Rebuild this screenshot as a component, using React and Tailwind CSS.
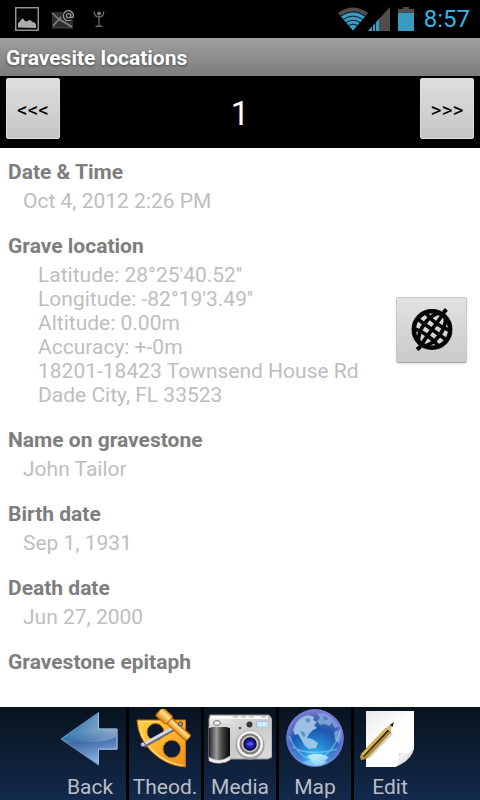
import React from "react";

function PictureIcon() {
  return (
    <svg width="24" height="24" viewBox="0 0 24 24" aria-hidden="true">
      <rect x="0.75" y="0.75" width="22.5" height="22.5" fill="#050505" stroke="#a5a5a5" strokeWidth="1.3" />
      <path d="M3 20.5V16l2-1.5 1-2 2-1 2 2.5 2 .5 2-1.500 2 .5 1.500 1.500 2 .5 1.500 2v3.500z" fill="#ababab" />
    </svg>
  );
}

function MailIcon() {
  return (
    <svg width="24" height="20" viewBox="0 0 24 20" aria-hidden="true">
      <rect x="1" y="3" width="21" height="16" fill="#303030" />
      <path d="M1 4l8 7 4 2 8 5M2 17l8-9" fill="none" stroke="#858585" strokeWidth="1.500" />
      <path d="M1 19h21" stroke="#444" />
      <circle cx="17.500" cy="6.500" r="6.200" fill="#0b0b0b" />
      <circle cx="17.500" cy="6.700" r="2.100" fill="none" stroke="#999" strokeWidth="1.300" />
      <path d="M19.700 4.500v3.300c0 1.400 2.700 1.300 2.700-1.400a5 5 0 1 0-2 4.300" fill="none" stroke="#999" strokeWidth="1.300" />
    </svg>
  );
}

function BeaconIcon() {
  return (
    <svg width="12" height="18" viewBox="0 0 12 18" aria-hidden="true">
      <circle cx="6" cy="3.500" r="2" fill="#777" />
      <path d="M1.300 1.500Q1.300 7 6 7t4.700-5.500M6 6v10M2.500 16.200h7" fill="none" stroke="#666" strokeWidth="1.400" />
    </svg>
  );
}

function WifiIcon() {
  return (
    <svg width="30" height="24" viewBox="0 0 30 24" aria-hidden="true">
      <path d="M15 23.500L0 6Q15-5 30 6z" fill="#504c4b" />
      <path d="M15 23.500L3 9.500Q15 1 27 9.500z" fill="#379bc2" />
      <path d="M5.500 12.300Q15 6 24.500 12.300M8 15.500Q15 11 22 15.500M10.500 18.500Q15 15.700 19.500 18.500M2.800 9Q15 .5 27.200 9" fill="none" stroke="#031820" strokeWidth="1" />
    </svg>
  );
}

function SignalIcon() {
  return (
    <svg width="22" height="24" viewBox="0 0 22 24" aria-hidden="true">
      <path d="M0 24L22 0v24z" fill="#504c4b" />
      <path d="M0 24L11 12v12z" fill="#379bc2" />
      <path d="M4.500 18v6M7.500 15v9" stroke="#06202a" strokeWidth="1" />
    </svg>
  );
}

function BatteryIcon() {
  return (
    <svg width="16" height="24" viewBox="0 0 16 24" aria-hidden="true">
      <path d="M5 0h6v2h5v22H0V2h5z" fill="#504c4b" />
      <path d="M0 6h16v18H0z" fill="#379bc2" />
    </svg>
  );
}

function WireGlobeIcon() {
  return (
    <svg width="44" height="44" viewBox="0 0 44 44" fill="none" stroke="#050505" aria-hidden="true">
      <path d="M8.500 41.500L36 1.500" strokeWidth="2.500" />
      <path d="M7 41.500l3.500-3M33.500 4.500l3-3" strokeWidth="4" />
      <circle cx="22" cy="21.500" r="18.200" strokeWidth="4.500" />
      <g transform="rotate(36 22 21.500)" strokeWidth="3.600">
        <ellipse cx="22" cy="21.500" rx="9.500" ry="18.500" />
        <path d="M22 3v37M4.500 21.500h35M8 12Q22 16 36 12M8 31Q22 27 36 31" />
      </g>
    </svg>
  );
}

function BackIcon() {
  return (
    <svg width="60" height="60" viewBox="0 0 60 60" aria-hidden="true">
      <defs>
        <linearGradient id="arrowFill" x1="0" y1="0" x2="0.2" y2="1">
          <stop offset="0" stopColor="#3f7eb4" />
          <stop offset="0.450" stopColor="#769fc9" />
          <stop offset="0.600" stopColor="#3d68a4" />
          <stop offset="1" stopColor="#88aedf" />
        </linearGradient>
        <linearGradient id="arrowShine" x1="0" y1="0" x2="1" y2="0">
          <stop offset="0" stopColor="#1563a4" stopOpacity="0.700" />
          <stop offset="1" stopColor="#a9c0da" stopOpacity="0.600" />
        </linearGradient>
      </defs>
      <path d="M1 30L38.500 3.500V20h18.500v20.500H38.500V56z" fill="url(#arrowFill)" stroke="#7ca4cc" strokeWidth="0.800" />
      <path d="M2 30L38 5v16h18v7q-9 5-27 5T2 30z" fill="url(#arrowShine)" />
      <path d="M38.500 4v16H57v20H38.500v15" fill="none" stroke="#9dbbdb" />
      <path d="M2 30.500l36-26" stroke="#3f8bc7" />
    </svg>
  );
}

function TheodoliteIcon() {
  return (
    <svg width="60" height="60" viewBox="0 0 60 60" aria-hidden="true">
      <defs>
        <linearGradient id="plateFill" x1="0" y1="0" x2="0.700" y2="1">
          <stop offset="0" stopColor="#ffd04d" />
          <stop offset="0.500" stopColor="#ffb62d" />
          <stop offset="1" stopColor="#f0961f" />
        </linearGradient>
        <linearGradient id="rodFill" x1="0" y1="0" x2="0" y2="1">
          <stop offset="0" stopColor="#e79222" />
          <stop offset="0.350" stopColor="#ffe38a" />
          <stop offset="1" stopColor="#de7f10" />
        </linearGradient>
      </defs>
      <path
        fillRule="evenodd"
        d="M2 11h48.500v47Q31 57 16 42 3 29 2 11zM12 23a8.500 8.500 0 1 0 17 0 8.500 8.500 0 1 0-17 0zM28 40a8.800 8.800 0 1 0 17.600 0 8.800 8.800 0 1 0-17.600 0z"
        fill="url(#plateFill)"
        stroke="#c06c10"
      />
      <path d="M3.500 12.500H24M5 20q3 12 13 22 12 12 30 14.500" fill="none" stroke="#ffe28c" strokeWidth="1.200" />
      <path d="M10 36L45 16" stroke="#716c72" strokeWidth="4.500" strokeLinecap="round" />
      <path d="M9 35L44 15.500" stroke="#d8d9df" strokeWidth="3" strokeLinecap="round" />
      <circle cx="8" cy="35.500" r="2.200" fill="#d5d2ef" stroke="#58526c" />
      <g transform="translate(27 5) rotate(42)">
        <rect x="2" y="-3.500" width="34" height="7.500" rx="1.500" fill="url(#rodFill)" stroke="#b9660c" />
        <rect x="-4" y="-5.500" width="14" height="11" rx="2" fill="url(#rodFill)" stroke="#b9660c" />
      </g>
      <circle cx="45.500" cy="15" r="2.300" fill="#949291" stroke="#65513f" />
    </svg>
  );
}

function CameraIcon() {
  return (
    <svg width="64" height="60" viewBox="0 0 64 60" aria-hidden="true">
      <defs>
        <linearGradient id="bodyFill" x1="0" y1="0" x2="1" y2="1">
          <stop offset="0" stopColor="#f0f0f0" />
          <stop offset="0.500" stopColor="#c9c9c9" />
          <stop offset="1" stopColor="#dedede" />
        </linearGradient>
        <linearGradient id="gripFill">
          <stop offset="0" stopColor="#252525" />
          <stop offset="0.350" stopColor="#9b9b9b" />
          <stop offset="0.600" stopColor="#4a4a4a" />
          <stop offset="1" stopColor="#050505" />
        </linearGradient>
        <radialGradient id="lensFill">
          <stop offset="0" stopColor="#5b5af0" />
          <stop offset="0.450" stopColor="#211ec4" />
          <stop offset="1" stopColor="#080714" />
        </radialGradient>
      </defs>
      <path d="M2 6h59l3 4v38l-4 2H23l-5 3H5l-4-3V10z" fill="url(#bodyFill)" stroke="#929292" />
      <path d="M3 7h57v3H3z" fill="#fafafa" />
      <path d="M25 8h24M53 8h6" stroke="#aaa" strokeDasharray="5 3" />
      <path d="M1 18h21v33q-10 5-21 0z" fill="url(#gripFill)" />
      <path d="M1 17q9-5 21 0v2q-11-5-21 0zM1 48q10 7 21-1v4q-10 6-21 1z" fill="#ededed" stroke="#b3b3b3" strokeWidth="0.500" />
      <ellipse cx="9" cy="14" rx="3.500" ry="2.300" fill="#fff" stroke="#666" />
      <circle cx="41.500" cy="15.500" r="3" fill="#353535" />
      <circle cx="32" cy="19" r="1.300" fill="#6d4646" />
      <rect x="48.500" y="12.500" width="12" height="5.500" fill="#c3e7f8" stroke="#a2c4d4" />
      <path d="M52 13v5M56 13v5" stroke="#eefbff" />
      <circle cx="42" cy="36" r="14.500" fill="#a1a1a1" />
      <circle cx="42" cy="35" r="13" fill="#f0f0f0" />
      <circle cx="42" cy="35" r="10.500" fill="#7a7a7a" />
      <circle cx="42" cy="35" r="8.500" fill="#c5c5bd" />
      <circle cx="42" cy="35" r="6.700" fill="url(#lensFill)" />
      <path d="M38.500 35h3M43 33l2 3" stroke="#716ef5" />
    </svg>
  );
}

function EarthIcon() {
  return (
    <svg width="60" height="60" viewBox="0 0 60 60" aria-hidden="true">
      <defs>
        <radialGradient id="oceanFill" cx="0.500" cy="0.850" r="0.850">
          <stop offset="0" stopColor="#4ad6fb" />
          <stop offset="0.250" stopColor="#2590da" />
          <stop offset="0.600" stopColor="#1c58ae" />
          <stop offset="1" stopColor="#6d70c0" />
        </radialGradient>
        <radialGradient id="rimFill">
          <stop offset="0.750" stopColor="#7d86dd" stopOpacity="0" />
          <stop offset="1" stopColor="#7d7fdc" stopOpacity="0.850" />
        </radialGradient>
      </defs>
      <circle cx="30" cy="29" r="28.700" fill="url(#oceanFill)" />
      <path d="M11 14q5-7 12-8l6 2-1 3 4 2-3 3 3 3-4 2-4 4-2 4 5 1 6 4-2 5-7 1-4-3-4-7-3-5-3 1-2-5z" fill="#a8cbe8" opacity="0.900" />
      <path d="M22 47l6-2 8 0 8 3-4 4-4 5-6 0-3-5z" fill="#c6ecfb" opacity="0.850" />
      <path d="M32 4l8 0 7 4 7 9-4 2-3-5-3 3-4-2-5 1-3-4 3-3zM49 23l5-2 3 6-3 8-4-4z" fill="#98c0e6" opacity="0.650" />
      <path d="M20 10l4-1 2 3-4 2zM15 22l4 1 2 4-3 1zM38 7l4 1 1 3-4 0z" fill="#356fba" opacity="0.600" />
      <circle cx="30" cy="29" r="28.700" fill="url(#rimFill)" />
      <path d="M4 27q9 22 27 25Q50 43 56 20M8 38q16 10 44 2" fill="none" stroke="#a5d8f6" strokeWidth="1.500" opacity="0.500" />
      <path d="M17 53q13-5 26 0-13 8-26 0z" fill="#9ef8ff" opacity="0.500" />
    </svg>
  );
}

function EditIcon() {
  return (
    <svg width="60" height="60" viewBox="0 0 60 60" aria-hidden="true">
      <defs>
        <linearGradient id="paperFill" x1="0" y1="0" x2="0.600" y2="1">
          <stop offset="0" stopColor="#e9e9e7" />
          <stop offset="0.500" stopColor="#fff" />
        </linearGradient>
        <linearGradient id="curlFill" x1="0" y1="0" x2="1" y2="1">
          <stop offset="0" stopColor="#777" />
          <stop offset="0.350" stopColor="#f4f4f4" />
          <stop offset="1" stopColor="#c4c4c4" />
        </linearGradient>
      </defs>
      <path d="M6 2h48v38L36 58H6z" fill="url(#paperFill)" />
      <path d="M35 58q4-6 4-14 9 2 15-4-3 12-19 18z" fill="url(#curlFill)" />
      <path d="M8 49l24-25" stroke="#d5d5d0" strokeWidth="3" />
      <path d="M1 45L26 19l5 4L6 50z" fill="#33260f" />
      <path d="M1 45L26 19l2 1.500L3 47z" fill="#dcb650" />
      <path d="M4 48L29 22l2 1L6 50z" fill="#b88f33" />
      <path d="M26 19l6-5-1 9z" fill="#d3bd80" />
      <path d="M30 16l4-3-1.500 5z" fill="#181818" />
      <path d="M1 45l5 5-5 1-1-3z" fill="#b6994c" />
    </svg>
  );
}

function Section({ title, action, indent = "pl-[15px]", children }) {
  return (
    <section>
      <h2 className="font-bold leading-6 text-[#7e7e7e]">{title}</h2>
      <div className={`mt-[5px] flex items-center justify-between leading-6 text-[#bebebe] ${indent}`}>
        <div>{children}</div>
        {action}
      </div>
    </section>
  );
}

const tools = [
  { label: "Back", Icon: BackIcon },
  { label: "Theod.", Icon: TheodoliteIcon },
  { label: "Media", Icon: CameraIcon },
  { label: "Map", Icon: EarthIcon },
  { label: "Edit", Icon: EditIcon },
];

const navButton =
  "h-[61px] w-[54px] rounded-xs border border-[#dedede] bg-linear-to-b from-[#dedede] to-[#c5c5c5] pt-1 text-[21px] text-black";

export default function App() {
  return (
    <div className="flex min-h-screen flex-col bg-white font-[Roboto,sans-serif] text-[21px]">
      <div className="flex h-[38px] items-center justify-between bg-black pr-[10px] pl-[15px]">
        <div className="flex items-center gap-3">
          <PictureIcon />
          <MailIcon />
          <div className="pl-1.5">
            <BeaconIcon />
          </div>
        </div>
        <div className="flex items-center">
          <WifiIcon />
          <SignalIcon />
          <div className="ml-2">
            <BatteryIcon />
          </div>
          <time className="ml-2.5 text-2xl text-[#33b5e5]">8:57</time>
        </div>
      </div>

      <header className="flex h-[38px] items-center bg-linear-to-b from-[#a0a0a0] to-[#7c7c7c] px-1.5 pt-1">
        <h1 className="font-bold text-white text-shadow-[0_1px_3px_#444]">Gravesite locations</h1>
      </header>

      <nav aria-label="Records" className="flex h-[72px] items-start justify-between bg-black px-1.5 pt-[2px]">
        <button type="button" aria-label="Previous record" className={navButton}>
          &lt;&lt;&lt;
        </button>
        <span className="self-center text-[33px] leading-none text-white">1</span>
        <button type="button" aria-label="Next record" className={navButton}>
          &gt;&gt;&gt;
        </button>
      </nav>

      <main className="flex flex-1 flex-col gap-[21px] px-2 pt-3 pb-5">
        <Section title="Date & Time">Oct 4, 2012 2:26 PM</Section>
        <Section
          title="Grave location"
          indent="pl-[30px]"
          action={
            <button
              type="button"
              aria-label="Show on map"
              className="mr-[5px] mb-[10px] flex h-[66px] w-[71px] shrink-0 items-center justify-center rounded-xs border border-[#c9c9c9] border-b-[#a5a5a5] bg-linear-to-b from-[#e2e2e2] to-[#cacaca] shadow-sm"
            >
              <WireGlobeIcon />
            </button>
          }
        >
          <p>Latitude: 28°25'40.52''</p>
          <p>Longitude: -82°19'3.49''</p>
          <p>Altitude: 0.00m</p>
          <p>Accuracy: +-0m</p>
          <p>18201-18423 Townsend House Rd</p>
          <p>Dade City, FL 33523</p>
        </Section>
        <Section title="Name on gravestone">John Tailor</Section>
        <Section title="Birth date">Sep 1, 1931</Section>
        <Section title="Death date">Jun 27, 2000</Section>
        <h2 className="font-bold leading-6 text-[#7e7e7e]">Gravestone epitaph</h2>
      </main>

      <footer className="flex h-[93px] justify-center bg-linear-to-b from-[#08131f] to-[#132a4c]">
        <div className="flex divide-x-3 divide-black">
          {tools.map(({ label, Icon }) => (
            <button
              key={label}
              type="button"
              className="flex w-[75px] flex-col items-center pt-0.5 leading-6 text-[#b9bec6] last:w-[72px]"
            >
              <Icon />
              <span className="mt-1.5">{label}</span>
            </button>
          ))}
        </div>
      </footer>
    </div>
  );
}
